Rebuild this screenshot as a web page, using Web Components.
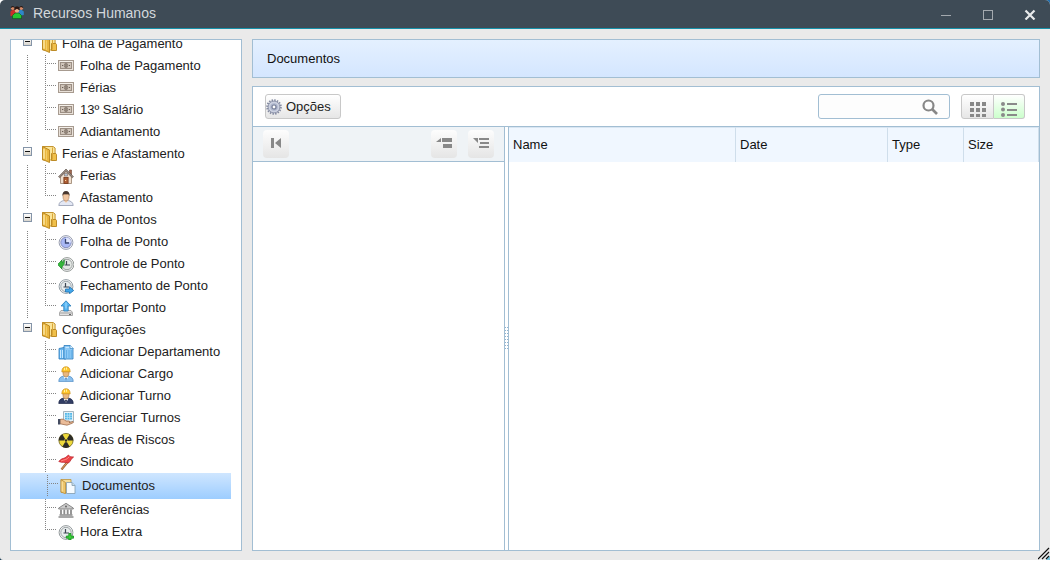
<!DOCTYPE html>
<html lang="pt-BR">
<head>
<meta charset="utf-8">
<title>Recursos Humanos</title>
<style>
  html, body { margin: 0; height: 100%; background: #fff; }
  body {
    --line: #a2bed3;
    font: 13px/22px "Liberation Sans", Arial, sans-serif;
    color: #222;
    display: flex;
    overflow: hidden;
  }
  rh-window { flex: 1; margin: 0 1px 1px 0; }
</style>
</head>
<body>
<rh-window caption="Recursos Humanos">
  <rh-tree slot="nav">
    <rh-group label="Folha de Pagamento">
      <rh-item icon="money" label="Folha de Pagamento"></rh-item>
      <rh-item icon="money" label="Férias"></rh-item>
      <rh-item icon="money" label="13º Salário"></rh-item>
      <rh-item icon="money" label="Adiantamento" last></rh-item>
    </rh-group>
    <rh-group label="Ferias e Afastamento">
      <rh-item icon="house" label="Ferias"></rh-item>
      <rh-item icon="person" label="Afastamento" last></rh-item>
    </rh-group>
    <rh-group label="Folha de Pontos">
      <rh-item icon="clockBlue" label="Folha de Ponto"></rh-item>
      <rh-item icon="clockBack" label="Controle de Ponto"></rh-item>
      <rh-item icon="clockGo" label="Fechamento de Ponto"></rh-item>
      <rh-item icon="upload" label="Importar Ponto" last></rh-item>
    </rh-group>
    <rh-group label="Configurações" last>
      <rh-item icon="building" label="Adicionar Departamento"></rh-item>
      <rh-item icon="worker" label="Adicionar Cargo"></rh-item>
      <rh-item icon="workerSuit" label="Adicionar Turno"></rh-item>
      <rh-item icon="shift" label="Gerenciar Turnos"></rh-item>
      <rh-item icon="radiation" label="Áreas de Riscos"></rh-item>
      <rh-item icon="flag" label="Sindicato"></rh-item>
      <rh-item icon="docs" label="Documentos" selected></rh-item>
      <rh-item icon="bank" label="Referências"></rh-item>
      <rh-item icon="clockAdd" label="Hora Extra" last></rh-item>
    </rh-group>
  </rh-tree>
  <rh-heading>Documentos</rh-heading>
  <rh-files></rh-files>
</rh-window>

<script>
const clockFace = (rim, face) => `
  <circle cx="8" cy="8.500" r="6.900" fill="#f4f5f6" stroke="${rim}" stroke-width="1"/>
  <circle cx="8" cy="8.500" r="5.200" fill="${face}" stroke="${rim}" stroke-width=".9"/>
  <path d="M7.500 5v4M5.500 9h5.500" stroke="#3d4654" stroke-width="1.200" fill="none"/>`;

const workerShape = (coat, dark, inner) => `
  <path d="M.8 15.600c0-3.600 1.700-5 5.200-5.600h4c3.500.6 5.200 2 5.200 5.600z" fill="${coat}" stroke="${dark}" stroke-width=".7"/>
  <path d="M5.500 10.500h5L8 15z" fill="${inner}"/>
  <path d="M8 11.500l1 1-1 3-1-3z" fill="${dark}"/>
  <path d="M5 4.500h6V7c0 2.500-1.500 4-3 4S5 9.500 5 7z" fill="#e9b880" stroke="#a87337" stroke-width=".6"/>
  <path d="M3.800 5.800C4 2.200 5.500.8 8 .8s4 1.400 4.200 5z" fill="#ffc72e" stroke="#c98a10" stroke-width=".7"/>
  <path d="M6.500 1.800v2.400M8.500 1.500v2.200" stroke="#fff2a0" stroke-width="1"/>`;

const ICONS = {
  money: `<rect x=".5" y="2.500" width="15" height="10" fill="#e9e1d9" stroke="#a79b90"/>
    <rect x="2.500" y="4.500" width="11" height="6" fill="#cfc4b9" stroke="#9c8f84"/>
    <path d="M1.500 3.500h13" stroke="#f5f0ea"/>
    <ellipse cx="8" cy="7.500" rx="1.700" ry="2.300" fill="#b9aca0" stroke="#83766c" stroke-width=".8"/>
    <path d="M4 7.500h1.200M10.800 7.500H12M8 6v3" stroke="#6b5e55"/>`,
  house: `<path d="M2.500 8.500L8 3l5.500 5.500v7h-11z" fill="#f0dfcf" stroke="#98806b" stroke-width=".8"/>
    <path d="M11.500 2v4l2 2V2z" fill="#a46a51" stroke="#704333" stroke-width=".6"/>
    <path d="M.5 8.700L8 1l7.500 7.700-1.200 1L8 3.500 1.700 9.700z" fill="#9b8d84" stroke="#54483f" stroke-width=".6"/>
    <rect x="5.900" y="9.500" width="4.200" height="6" fill="#ae5e35" stroke="#733719" stroke-width=".8"/>
    <rect x="6.500" y="5.500" width="3" height="2.500" fill="#b3c4d8" stroke="#80706a" stroke-width=".6"/>
    <path d="M7 12.500h1.200" stroke="#ffd8a0"/>`,
  person: `<path d="M.8 15.500c.2-3.500 2.700-4.500 5.200-5h4c2.500.5 5 1.500 5.200 5z" fill="#e4e8f4" stroke="#9299ae" stroke-width=".8"/>
    <path d="M5.500 10.500L8 13l2.500-2.500" fill="#f4cfae"/>
    <path d="M5 4h6v3c0 2.500-1.500 4-3 4S5 9.500 5 7z" fill="#f1c6a0" stroke="#a97d5c" stroke-width=".6"/>
    <path d="M4.500 6C4.200 2.500 5.700 1 8 1s3.800 1.500 3.500 5L10.500 4.200h-5z" fill="#48372f"/>`,
  clockBlue: `<circle cx="8" cy="8.500" r="6.900" fill="#f2f3f8" stroke="#999fb0"/>
    <circle cx="8" cy="8.500" r="5.200" fill="#a9b8f5" stroke="#8189b4" stroke-width=".9"/>
    <path d="M8 8.500V3.500a5 5 0 0 1 5 5z" fill="#dfe5fd"/><path d="M7.500 5v4H11" stroke="#39456f" stroke-width="1.300" fill="none"/>`,
  clockBack: `<g transform="translate(1)">${clockFace('#949a97', '#e3e7e4')}</g>
    <path d="M-.5 8.500L4 4v2.300c1.200-.2 2-1.200 2-2.800 1.200 4-.5 6.700-2 7V13z" fill="#35b63b" stroke="#187d24" stroke-width=".6"/>`,
  clockGo: clockFace('#949ea5', '#e6ebed') + `<path d="M7.500 11h4V8.800l4.200 3.700-4.200 3.300V14h-4z" fill="#43a7ea" stroke="#1d70b0" stroke-width=".8"/>`,
  clockAdd: clockFace('#949b9d', '#e8eded') + `<path d="M10.800 9.500h2.200V12h2.500v2.200H13V16h-2.200v-1.800H8.300V12h2.500z" fill="#39ce38" stroke="#148b20" stroke-width=".8"/>`,
  upload: `<path d="M3 10.500h10l1.500 2v3h-13v-3z" fill="#e2e2e2" stroke="#989898" stroke-width=".8"/>
    <path d="M2 13h12" stroke="#a2a2a2"/><path d="M11 14.500h2" stroke="#666"/><path d="M8 .8L13 6h-2.800v5H5.800V6H3z" fill="#57b6f2" stroke="#297bb9" stroke-width=".8"/>
    <path d="M8 2.500v6" stroke="#a9ddff"/>`,
  building: `<path d="M1 4.500L8 3v12H1z" fill="#69b5ed" stroke="#2c7bbd" stroke-width=".8"/>
    <path d="M6 1.500h6.500l2.500 2.500v11H6z" fill="#8dcaf7" stroke="#2c7bbd" stroke-width=".8"/>
    <path d="M7.500 3.500h4M2.500 6v8M4.500 6v8" stroke="#c6e7ff"/><path d="M8.500 6v8M11 6v8M13.300 6v8" stroke="#5aa8e3" stroke-width=".8"/><path d="M12 1v3.500h3.500" fill="#e3f4ff" stroke="#3b89c7" stroke-width=".7"/>`,
  worker: workerShape('#8bc0ee', '#4b88c2', '#f5fbff'),
  workerSuit: workerShape('#323d64', '#172142', '#ffffff'),
  shift: `<path d="M5.500 1.500h10v10.500h-10z" fill="#e6f2f8" stroke="#92a5ae" stroke-width=".8"/>
    <path d="M7 3h7v6.500H7z" fill="#52b7e8"/><path d="M9.300 3v6.500M11.700 3v6.500M7 5.200h7M7 7.400h7" stroke="#c4e9f9" stroke-width=".7"/>
    <path d="M2 9.500c3-1 4 0 6 1.500h3c1 0 .8 1.600 0 1.600l4-1.100c1 .6 0 1.500-.8 1.800L9 15.200 2 13.800z" fill="#eabc99" stroke="#93603f" stroke-width=".7"/>
    <path d="M0 9h2.200v5.500H0z" fill="#444b60"/>`,
  radiation: `<circle cx="8" cy="8.500" r="7.100" fill="#eed93b" stroke="#6f6421" stroke-width=".8"/>
    <g fill="#2d2c28" transform="translate(0 .5)"><path d="M7 9.700l-2.700 4.600a7.300 7.300 0 0 0 7.400 0L9 9.700z"/><path d="M6 8H.7a7.300 7.300 0 0 1 3.600-6.300L7 6.300z"/><path d="M10 8h5.300a7.300 7.300 0 0 0-3.600-6.300L9 6.300z"/><circle cx="8" cy="8" r="1.200"/></g>`,
  flag: `<path d="M12 5L3.500 15.500" stroke="#9a5c2d" stroke-width="2.200"/><path d="M11.500 6L3.500 15.200" stroke="#e2ab70" stroke-width=".9"/>
    <path d="M.8 7.500C3 4.500 5 4.800 7 3.800S9.500 1.200 10.500 1l1.500 1.700 3.600.3C13.500 4 12.500 7.500 10.500 9 7.500 8 4 9 .8 7.500z" fill="#ed4447" stroke="#b81f29" stroke-width=".7"/>
    <path d="M3 7c3-1.500 6-1 8-4" stroke="#ff8c83" fill="none"/>`,
  docs: `<path d="M1 1.500h10v13H1z" fill="#f6dd99" stroke="#bd943f" stroke-width=".8"/>
    <path d="M6.500 4.500h5.500l3 3v8H6.500z" fill="#f6fbff" stroke="#829cad" stroke-width=".8"/><path d="M12 4.500v3h3" fill="#c9dce8" stroke="#829cad" stroke-width=".8"/>
    <path d="M1 1.500l4.500 3v11.300L1 14z" fill="#edc66c" stroke="#ba8e3c" stroke-width=".8"/><path d="M2.200 3.500v10" stroke="#fbe6ab"/>`,
  bank: `<path d="M.7 6L8 1.300 15.300 6v1H.7z" fill="#c9c9c9" stroke="#737373" stroke-width=".8"/><circle cx="8" cy="4.500" r="1" fill="#666"/>
    <path d="M3 7.500v5M6.300 7.500v5M9.700 7.500v5M13 7.500v5" stroke="#8c8c8c" stroke-width="1.800"/><path d="M1.500 13h13M.5 15h15" stroke="#8a8a8a" stroke-width="1.400"/>`,
  folder: `<path d="M.6 1.500h10.500l2 1.500v12H.6z" fill="#fbe59a" stroke="#bd8a20" stroke-width=".9"/>
    <path d="M9.500 8.500h4.300l.7 1v6H9.500z" fill="#f0c04a" stroke="#b8851d" stroke-width=".9"/>
    <path d="M10.500 2.500v12" stroke="#d9a638"/><path d="M.6 1.500L7.500 5v12.500L.6 14.500z" fill="#e9b53e" stroke="#b8851d" stroke-width=".9"/>
    <path d="M2 3.800v10" stroke="#fce9a4" stroke-width="1.500"/><path d="M4.500 5.500v9.500" stroke="#f3cd67"/>`,
  people: `<path d="M1.500 12V7.500l2.500-2 3 1V12z" fill="#c9302a"/><path d="M9 12V6.500l3-1L14.800 7.500V11z" fill="#2f86c9"/>
    <circle cx="3.700" cy="4.200" r="1.700" fill="#d98a66"/><circle cx="12.300" cy="4.200" r="1.700" fill="#d98a66"/>
    <path d="M1.800 4C1.700 1.300 5.700 1.300 5.600 4L4 3zM10.400 4c-.1-2.700 3.900-2.700 3.800 0L12 3z" fill="#201513"/>
    <path d="M3.500 14.600V11.500L6 9h4l2.500 2.500v3.100z" fill="#25c832" stroke="#0a511a" stroke-width=".6"/>
    <circle cx="8" cy="6.500" r="2.200" fill="#e9ad88"/><path d="M5.600 6.300C5 2.500 7 2.500 8 2.500s3 0 2.400 3.800L8 4.800z" fill="#2b1611"/>`,
  gear: `<circle cx="8" cy="8" r="6.800" fill="none" stroke="#858ba1" stroke-width="2" stroke-dasharray="1.500 1.170"/>
    <circle cx="8" cy="8" r="5.900" fill="#ccd1e0" stroke="#8f96ad" stroke-width="1"/><circle cx="8" cy="8" r="3.800" fill="#adb5cc"/>
    <circle cx="8" cy="8" r="2" fill="#fff" stroke="#777f98" stroke-width="1.200"/>`
};

/* Registers an element whose open shadow root holds the markup returned by view(). */
function define(name, view) {
  customElements.define(name, class extends HTMLElement {
    connectedCallback() {
      if (this.shadowRoot) return;
      const t = document.createElement('template');
      t.innerHTML = view(this);
      this.attachShadow({ mode: 'open' }).append(t.content.cloneNode(true));
    }
  });
}

define('rh-icon', el => {
  const tall = el.getAttribute('name') === 'folder';
  const w = tall ? 15 : 16, h = tall ? 18 : 16;
  return `
  <style>:host{display:block;flex:none;width:${w}px;height:${h}px}svg{display:block;width:100%;height:100%}</style>
  <svg viewBox="0 0 ${w} ${h}" aria-hidden="true">${ICONS[el.getAttribute('name')]}</svg>`;
});

define('rh-window', el => `
  <style>
    :host { display: flex; min-width: 0; background:
      linear-gradient(90deg, #fff, #1f6fb0) top / 100% 50% no-repeat,
      linear-gradient(90deg, #16384e, #5cc0e0) bottom / 100% 50% no-repeat; }
    section { flex: 1; min-width: 0; display: flex; flex-direction: column; position: relative; background: #eaeaea; border-radius: 5px 5px 3px 3px; overflow: hidden; }
    header { display: flex; align-items: flex-start; height: 28px; background: #3e4b56; border-bottom: 1px solid #1791a9; padding: 0 0 0 9px; }
    header rh-icon { margin-top: 4px; }
    h1 { flex: 1; margin: 0 0 0 8px; font: 14px/26px "Liberation Sans", Arial, sans-serif; color: #d3d8dc; }
    header button { width: 42px; height: 28px; padding: 0; border: 0; background: none; color: #a3a9ae; display: grid; place-items: center; }
    header button:last-child { color: #e8eaeb; width: 41px; }
    main { flex: 1; min-height: 0; display: flex; gap: 10px; padding: 10px 10px 9px; }
    nav { flex: none; width: 230px; border: 1px solid var(--line); background: #fff; overflow: hidden; }
    .work { flex: 1; min-width: 0; display: flex; flex-direction: column; gap: 8px; }
    .grip { position: absolute; right: 0; bottom: 0; width: 12px; height: 13px; }
  </style>
  <section>
    <header>
      <rh-icon name="people"></rh-icon>
      <h1>${el.getAttribute('caption')}</h1>
      <button aria-label="Minimizar"><svg width="12" height="12"><path d="M1 7.500h10" stroke="currentColor"/></svg></button>
      <button aria-label="Maximizar"><svg width="12" height="12"><rect x="1.500" y="2.500" width="9" height="9" fill="none" stroke="currentColor"/></svg></button>
      <button aria-label="Fechar"><svg width="12" height="12"><path d="M1.500 2.500l9 9M10.500 2.500l-9 9" stroke="currentColor" stroke-width="2.200"/></svg></button>
    </header>
    <main><nav aria-label="Menu"><slot name="nav"></slot></nav><div class="work"><slot></slot></div></main>
    <svg class="grip" viewBox="0 0 12 13" aria-hidden="true"><path d="M12 13V9l-4 4z" fill="#62bfdf"/><path d="M0 12L11 1M4 12l7-7M8 12l3-3" stroke="#111" stroke-width="1.200"/></svg>
  </section>`);

define('rh-tree', () => `
  <style>:host{display:block;margin:-7px 10px 0 9px}</style><div role="tree"><slot></slot></div>`);

define('rh-group', el => `
  <style>
    :host { display: block; }
    .row { display: flex; align-items: flex-start; height: 22px; }
    button { width: 9px; height: 9px; margin: 4px 10px 0 3px; padding: 0; border: 1px solid #8494a8; background: linear-gradient(#fff, #d8d4cc); display: grid; place-items: center; }
    rh-icon { margin-top: 2px; }
    .label { margin-left: 5px; white-space: nowrap; }
    .children { background: ${el.hasAttribute('last') ? 'none' : 'repeating-linear-gradient(#848484 0 1px, transparent 1px 2px) 7px 0 / 1px 100% no-repeat'}; }
  </style>
  <div class="row" role="treeitem" aria-expanded="true">
    <button aria-label="Recolher ${el.getAttribute('label')}"><svg width="5" height="7" style="display:block"><path d="M0 3.500h5" stroke="#111"/></svg></button>
    <rh-icon name="folder"></rh-icon>
    <span class="label">${el.getAttribute('label')}</span>
  </div>
  <div class="children" role="group"><slot></slot></div>`);

define('rh-item', el => `
  <style>
    :host { display: block; }
    :host([selected]) { background: linear-gradient(#cfe6ff, #9dcdff); padding: 0 2px; }
    a { display: flex; align-items: flex-start; height: 22px; color: inherit; text-decoration: none; padding-left: 38px;
      background:
        repeating-linear-gradient(#848484 0 1px, transparent 1px 2px) 25px 0 / 1px ${el.hasAttribute('last') ? '9px' : '100%'} no-repeat,
        repeating-linear-gradient(90deg, #848484 0 1px, transparent 1px 2px) 27px 8px / 10px 1px no-repeat; }
    rh-icon { margin-top: 3px; }
    span { margin-left: 6px; white-space: nowrap; }
    :host([selected]) a { height: 22px; padding-top: 2px; padding-bottom: 2px; background-position: 25px 2px, 27px 10px; background-size: 1px 22px, 10px 1px; }
  </style>
  <a href="#" role="treeitem"><rh-icon name="${el.getAttribute('icon')}"></rh-icon><span>${el.getAttribute('label')}</span></a>`);

define('rh-heading', () => `
  <style>:host{display:block;border:1px solid var(--line);background:linear-gradient(#e4f0ff,#d4e6ff)}
  h2{margin:0;padding:8px 14px 7px;font:inherit;color:#111}</style><h2><slot></slot></h2>`);

define('rh-files', () => `
  <style>
    :host { flex: 1; min-height: 0; display: flex; flex-direction: column; border: 1px solid var(--line); background: #fff; }
    svg { display: block; }
    button { font: inherit; color: inherit; box-sizing: border-box; padding: 0; border: 1px solid #c8c8c8; background: linear-gradient(#fff, #e6e6e6); }
    .bar { display: flex; align-items: flex-start; padding: 7px 14px 7px 12px; border-bottom: 1px solid var(--line); }
    .opt { height: 25px; width: 76px; border-radius: 3px; display: flex; align-items: center; gap: 4px; }
    .search { margin-left: auto; width: 132px; height: 25px; box-sizing: border-box; border: 1px solid var(--line); border-radius: 3px; display: flex; align-items: center; background: #fdfdfd; }
    input { flex: 1; min-width: 0; border: 0; padding: 0 4px; background: none; font: inherit; outline: 0; }
    .search svg { margin-right: 10px; }
    .views { display: flex; margin-left: 11px; }
    .views button { width: 32px; height: 25px; padding-bottom: 1px; display: flex; align-items: flex-end; justify-content: center; }
    .views button:first-child { border-radius: 3px 0 0 3px; width: 33px; }
    .views button:last-child { border-radius: 0 3px 3px 0; border-left: 0; width: 31px; background: linear-gradient(#fff, #ccffcc); }
    .split { flex: 1; display: flex; min-height: 0; }
    .folders { width: 251px; flex: none; }
    .tools { display: flex; height: 34px; padding: 0 10px; align-items: center; background: #eff3f6; border-bottom: 1px solid var(--line); }
    .tools button { width: 26px; height: 28px; border: 0; border-radius: 4px; background: linear-gradient(#fdfdfd, #e5e5e5); display: grid; place-items: center; }
    .tools button:nth-child(2) { margin-left: auto; margin-right: 11px; }
    .sizer { flex: none; width: 3px; border: solid var(--line); border-width: 0 1px; display: flex; align-items: center; }
    .sizer i { flex: 1; height: 23px; background:
      linear-gradient(#fff, #fff) 1px 0 / 1px 100% no-repeat,
      repeating-linear-gradient(#8fb2cf 0 1px, transparent 1px 3px); }
    .list { flex: 1; min-width: 0; }
    table { width: 100%; table-layout: fixed; border-collapse: separate; border-spacing: 0; }
    th { height: 34px; padding: 0 0 0 4px; text-align: left; font-weight: normal; color: #111; background: #f0f7ff; border-top: 1px solid #d9e6f2; border-right: 1px solid #cfdeeb; }
  </style>
  <div class="bar">
    <button class="opt"><rh-icon name="gear"></rh-icon>Opções</button>
    <div class="search"><input type="search" aria-label="Pesquisar">
      <svg width="18" height="18"><circle cx="7.500" cy="7.500" r="5" fill="none" stroke="#878787" stroke-width="2.200"/><path d="M11 11l5 5" stroke="#878787" stroke-width="2.600"/></svg></div>
    <div class="views">
      <button aria-label="Ícones"><svg width="16" height="16" fill="#888"><path d="M0 1h4v4H0zM6 1h4v4H6zM12 1h4v4h-4zM0 7h4v4H0zM6 7h4v4H6zM12 7h4v4h-4zM0 13h4v3H0zM6 13h4v3H6zM12 13h4v3h-4z"/></svg></button>
      <button aria-label="Lista"><svg width="16" height="16" fill="#8a8a8a"><circle cx="2" cy="3" r="2"/><circle cx="2" cy="8.500" r="2"/><circle cx="2" cy="14" r="2"/><path d="M6 2h10v2H6zM6 8h10v2H6zM6 13h10v2H6z"/></svg></button>
    </div>
  </div>
  <div class="split">
    <div class="folders"><div class="tools">
      <button aria-label="Recolher painel"><svg width="12" height="14" fill="#888"><path d="M1 1h3v10H1zM11 1v10L5 6z"/></svg></button>
      <button aria-label="Recolher tudo"><svg width="16" height="14" fill="#888"><path d="M5 1v4H0zM6 1h10v4H6zM7 7h9v4H7z"/></svg></button>
      <button aria-label="Expandir tudo"><svg width="16" height="14" fill="#888"><path d="M0 1h5v5zM6 1h10v2H6zM7 5h9v2H7zM6 9h10v2H6z"/></svg></button>
    </div></div>
    <div class="sizer"><i></i></div>
    <div class="list"><table>
      <colgroup><col><col style="width:152px"><col style="width:76px"><col style="width:75px"></colgroup>
      <thead><tr><th>Name</th><th>Date</th><th>Type</th><th>Size</th></tr></thead>
    </table></div>
  </div>`);
</script>
</body>
</html>
